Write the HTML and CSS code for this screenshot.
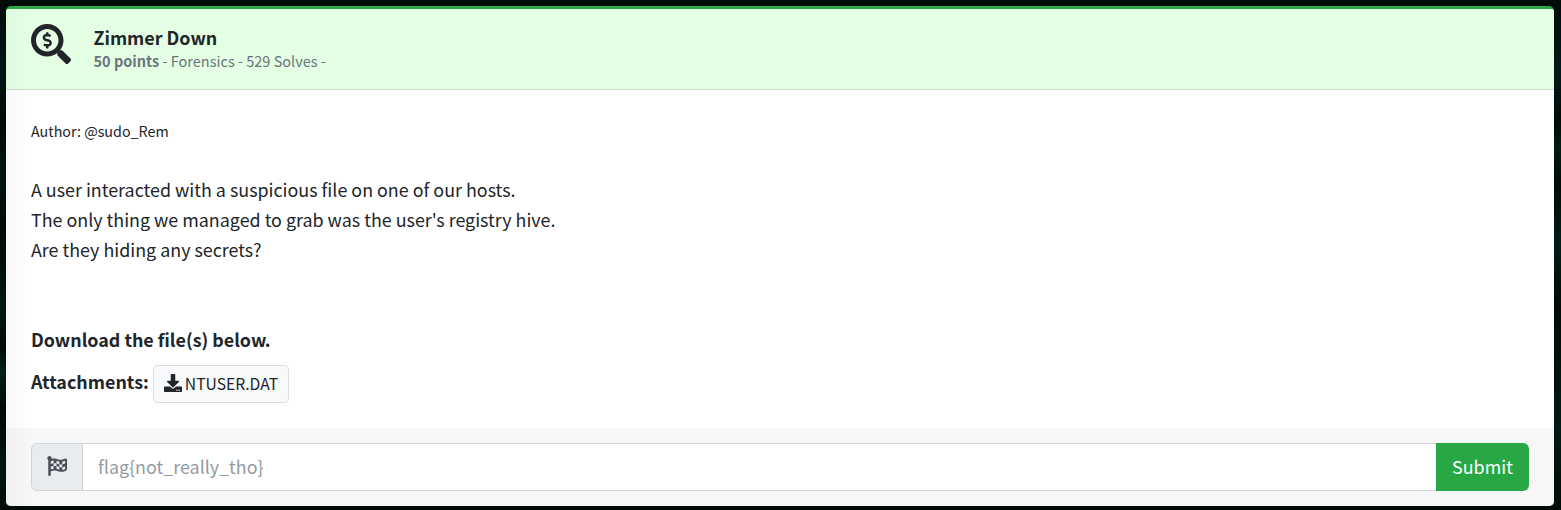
FILE: index.html
```html
<!DOCTYPE html>
<html lang="en">
<head>
<meta charset="utf-8">
<title>Zimmer Down</title>
<link rel="stylesheet" href="styles.css">
</head>
<body>
<main class="card">
  <header class="card-header">
    <svg class="icon-search" viewBox="0 0 512 512" aria-hidden="true"><path d="M505.04 442.66l-99.71-99.69c-4.5-4.5-10.6-7-17-7h-16.3c27.6-35.3 44-79.69 44-127.99C416.03 93.09 322.92 0 208.02 0S0 93.09 0 207.98s93.11 207.98 208.02 207.98c48.3 0 92.71-16.4 128.01-44v16.3c0 6.4 2.5 12.5 7 17l99.71 99.69c9.4 9.4 24.6 9.4 33.9 0l28.3-28.3c9.4-9.4 9.4-24.59.1-33.99zm-297.02-90.7c-79.54 0-144-64.34-144-143.98 0-79.53 64.35-143.98 144-143.98 79.54 0 144 64.34 144 143.98 0 79.53-64.35 143.98-144 143.98zm27.11-152.54l-45.01-13.5c-5.16-1.55-8.77-6.78-8.77-12.73 0-7.27 5.3-13.19 11.8-13.19h28.1c4.56 0 8.96 1.29 12.82 3.72 3.24 2.03 7.36 1.91 10.13-.73l11.75-11.21c3.53-3.37 3.33-9.21-.57-12.14-9.1-6.83-20.08-10.77-31.37-11.35V112c0-4.42-3.58-8-8-8h-16c-4.42 0-8 3.58-8 8v16.12c-23.63.63-42.68 20.55-42.68 45.07 0 19.97 12.99 37.81 31.58 43.39l45.01 13.5c5.16 1.55 8.77 6.78 8.77 12.73 0 7.27-5.3 13.19-11.8 13.19h-28.1c-4.56 0-8.96-1.29-12.82-3.72-3.24-2.03-7.36-1.91-10.13.73l-11.75 11.21c-3.53 3.37-3.33 9.21.57 12.14 9.1 6.83 20.08 10.77 31.37 11.35V304c0 4.42 3.58 8 8 8h16c4.42 0 8-3.58 8-8v-16.12c23.63-.63 42.68-20.54 42.68-45.07 0-19.97-12.99-37.81-31.59-43.39z"/></svg>
    <div class="heading">
      <h1 class="title">Zimmer Down</h1>
      <p class="meta"><b>50 points</b> - Forensics - 529 Solves -</p>
    </div>
  </header>
  <section class="card-body">
    <p class="author">Author: @sudo_Rem</p>
    <p class="description">A user interacted with a suspicious file on one of our hosts.<br>The only thing we managed to grab was the user's registry hive.<br>Are they hiding any secrets?</p>
    <p class="download-note">Download the file(s) below.</p>
    <div class="attachments">
      <span class="attachments-label">Attachments:</span>
      <a class="file-button"><svg class="icon-download" viewBox="0 0 512 512" aria-hidden="true"><path d="M216 0h80c13.3 0 24 10.7 24 24v168h87.7c17.8 0 26.7 21.5 14.1 34.1L269.7 378.3c-7.5 7.5-19.8 7.5-27.3 0L90.1 226.1c-12.6-12.6-3.7-34.1 14.1-34.1H192V24c0-13.3 10.7-24 24-24zm296 376v112c0 13.3-10.7 24-24 24H24c-13.3 0-24-10.7-24-24V376c0-13.3 10.7-24 24-24h146.7l49 49c20.1 20.1 52.5 20.1 72.6 0l49-49H488c13.3 0 24 10.7 24 24zm-124 88c0-11-9-20-20-20s-20 9-20 20 9 20 20 20 20-9 20-20zm64 0c0-11-9-20-20-20s-20 9-20 20 9 20 20 20 20-9 20-20z"/></svg><span>NTUSER.DAT</span></a>
    </div>
  </section>
  <footer class="card-footer">
    <div class="input-prefix"><svg class="icon-flag" viewBox="0 0 512 512" aria-hidden="true"><path d="M243.2 189.9V258c26.1 5.9 49.3 15.6 73.6 22.3v-68.2c-26-5.8-49.4-15.5-73.6-22.2zm223.3-123c-34.3 15.9-76.5 31.9-117 31.9C296 98.8 251.7 64 184.3 64c-25 0-47.3 4.4-68 12 2.8-7.3 4.1-15.2 3.6-23.6C118.1 24 94.8 1.2 66.3 0 34.3-1.3 8 24.3 8 56c0 19 9.5 35.8 24 45.9V488c0 13.3 10.7 24 24 24h16c13.3 0 24-10.7 24-24v-94.4c28.3-12.1 63.6-22.1 114.4-22.1 53.6 0 97.8 34.8 165.2 34.8 48.2 0 86.7-16.3 122.5-40.9 8.7-6 13.8-15.8 13.8-26.4V95.9c.1-23.3-24.2-38.8-45.4-29zM169.6 325.5c-25.8 2.7-50 8.2-73.6 16.6v-70.5c26.2-9.3 47.5-15 73.6-17.4v71.3zM464 191c-23.6 9.8-46.3 19.5-73.6 23.9V286c24.8-3.4 51.4-11.8 73.6-26v70.5c-25.1 16.1-48.5 24.7-73.6 27.1V286c-27 3.7-47.9 1.5-73.6-5.6v67.4c-23.9-7.4-47.3-16.7-73.6-21.3V258c-19.7-4.4-40.8-6.8-73.6-3.8v-70c-22.4 3.1-44.6 10.2-73.6 20.9v-70.5c33.2-12.2 50.1-19.8 73.6-22v71.6c27-3.7 48.4-1.3 73.6 5.7v-67.4c23.7 7.4 47.2 16.7 73.6 21.3v68.4c23.7 5.3 47.6 6.9 73.6 2.7V143c27-4.8 52.3-13.6 73.6-22.5z"/></svg></div>
    <input class="flag-input" type="text" placeholder="flag{not_really_tho}">
    <button class="submit" type="button">Submit</button>
  </footer>
</main>
</body>
</html>
```
FILE: styles.css
```css
* { box-sizing: border-box; }
body {
  margin: 0;
  height: 510px;
  padding: 6px 7px 4px 6px;
  overflow: hidden;
  color: #212529;
  background:
    linear-gradient(#000c09, #001a17 14%, #000c09 24%, #001d12 29%, #000c09 36%, #001d17 48%, #000c09 60%, #001a15 84%, #000c09) right / 7px 100% no-repeat,
    linear-gradient(#000b08, #001511 14%, #000b08 24%, #001511 34%, #000b08 44%, #001813 61%, #000b08 68%, #002014 73%, #000b08 80%, #001511 92%, #000b08);
  font: 17.89px/30px "Noto Sans CJK SC", sans-serif;
}
h1, p { margin: 0; }
svg { display: block; fill: currentColor; flex: none; }
.card {
  display: flex;
  flex-direction: column;
  height: 500px;
  border-top: 3px solid #28a745;
  border-radius: 5px;
  background: linear-gradient(90deg, rgba(0, 0, 0, .025), transparent 26px), #fff;
  overflow: hidden;
}
.card-header {
  display: flex;
  height: 81px;
  flex: none;
  padding: 15px 25px 0;
  gap: 22.5px;
  border-bottom: 1px solid #ced8ce;
  background: linear-gradient(90deg, rgba(0, 0, 0, .025), transparent 26px), #e4ffe4;
}
.icon-search { width: 40px; height: 40px; }
.heading { margin-top: -2px; }
.title { font-size: 17.89px; line-height: 30px; font-weight: 700; }
.meta { font-size: 14.53px; line-height: 18px; color: #6c757d; }
.card-body { flex: 1; padding: 26px 25px 0; }
.author { font-size: 14.31px; }
.description { margin-top: 28px; }
.download-note { margin-top: 60px; font-weight: 700; }
.attachments { display: flex; gap: 4px; margin-top: 11px; }
.attachments-label { font-weight: 700; line-height: 32px; }
.file-button {
  display: flex;
  align-items: center;
  gap: 3px;
  width: 136px;
  height: 38px;
  padding: 0 0 1px 10px;
  border: 1px solid #ddd;
  border-radius: 4px;
  background: #f8f9fa;
  font-size: 15.68px;
}
.icon-download { width: 18px; height: 18px; margin-bottom: 1px; }
.card-footer {
  display: flex;
  height: 78px;
  flex: none;
  padding: 15px 25px;
  background: linear-gradient(90deg, rgba(0, 0, 0, .025), transparent 26px), #f7f7f7;
}
.input-prefix {
  display: flex;
  align-items: center;
  justify-content: center;
  width: 52px;
  padding-bottom: 2px;
  border: 1px solid #ced4da;
  border-radius: 6px 0 0 6px;
  background: #e9ecef;
  color: #495057;
}
.icon-flag { width: 20px; height: 20px; }
.flag-input {
  flex: 1;
  min-width: 0;
  padding: 0 15px 2px;
  border: 1px solid #ced4da;
  border-left: 0;
  border-right: 0;
  border-radius: 0;
  background: #fff;
  font: inherit;
}
.flag-input::placeholder { color: #939ba2; opacity: 1; }
.submit {
  width: 93px;
  padding: 0 0 2px;
  border: 0;
  border-radius: 0 6px 6px 0;
  background: #28a745;
  color: #fff;
  font: inherit;
}
```
